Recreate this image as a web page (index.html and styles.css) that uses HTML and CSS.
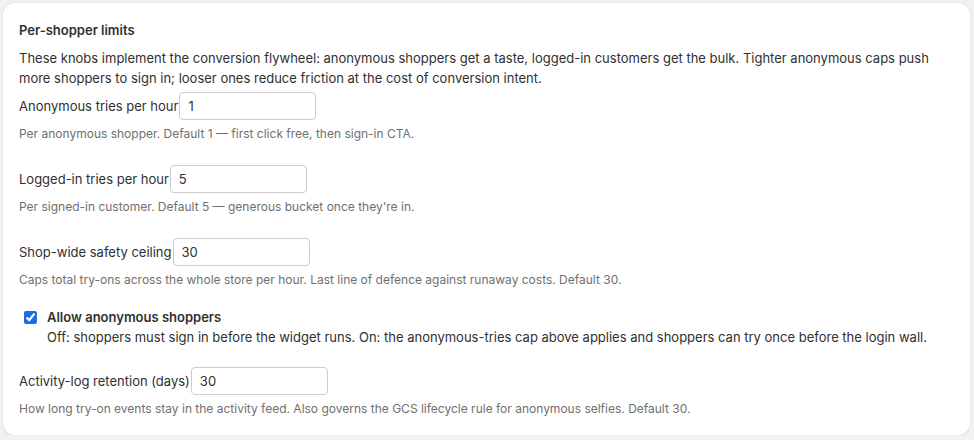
FILE: index.html
```html
<!DOCTYPE html>
<html>
<head>
<meta charset="utf-8">
<link rel="stylesheet" href="styles.css">
</head>
<body>
<div class="card">
  <h2 class="title">Per-shopper limits</h2>
  <p class="intro">These knobs implement the conversion flywheel: anonymous shoppers get a taste, logged-in customers get the bulk. Tighter anonymous caps push more shoppers to sign in; looser ones reduce friction at the cost of conversion intent.</p>

  <div class="field">
    <label class="row"><span>Anonymous tries per hour</span><input class="num" type="text" value="1"></label>
    <p class="help">Per anonymous shopper. Default 1 — first click free, then sign-in CTA.</p>
  </div>

  <div class="field">
    <label class="row"><span>Logged-in tries per hour</span><input class="num" type="text" value="5"></label>
    <p class="help">Per signed-in customer. Default 5 — generous bucket once they're in.</p>
  </div>

  <div class="field">
    <label class="row"><span>Shop-wide safety ceiling</span><input class="num" type="text" value="30"></label>
    <p class="help">Caps total try-ons across the whole store per hour. Last line of defence against runaway costs. Default 30.</p>
  </div>

  <div class="check">
    <input type="checkbox" checked class="cb">
    <div class="check-body">
      <div class="check-label">Allow anonymous shoppers</div>
      <div class="check-desc">Off: shoppers must sign in before the widget runs. On: the anonymous-tries cap above applies and shoppers can try once before the login wall.</div>
    </div>
  </div>

  <div class="field">
    <label class="row"><span>Activity-log retention (days)</span><input class="num" type="text" value="30"></label>
    <p class="help">How long try-on events stay in the activity feed. Also governs the GCS lifecycle rule for anonymous selfies. Default 30.</p>
  </div>
</div>
</body>
</html>
```

FILE: styles.css
```css
html, body {
  margin: 0;
  padding: 0;
  background: #f1f1f1;
}
body {
  padding: 3px 4px 0 3px;
  font-family: Inter, "Noto Sans", sans-serif;
  font-size: 13px;
  color: #303030;
}
.card {
  background: #fff;
  border-radius: 12px;
  padding: 16px 16px 15px 16px;
  box-shadow: 0 1px 0 0 rgba(26,26,26,0.07), 0 0 0 1px rgba(0,0,0,0.04);
  height: 432px;
  box-sizing: border-box;
}
.title {
  margin: 0;
  font-size: 13px;
  font-weight: 600;
  line-height: 22px;
  color: #303030;
}
.intro {
  margin: 7px 0 0 0;
  line-height: 20px;
}
.field {
  margin-top: 4px;
  margin-bottom: 21px;
}
.row {
  display: flex;
  align-items: center;
}
.num {
  width: 137px;
  height: 28px;
  box-sizing: border-box;
  margin: 0 0 0 1px;
  padding: 0 8px;
  border: 1px solid #cccccc;
  border-radius: 4px;
  font-family: Inter, "Noto Sans", sans-serif;
  font-size: 13px;
  color: #303030;
  background: #fff;
}
.help {
  margin: 4px 0 0 0;
  line-height: 20px;
  font-size: 12px;
  color: #707070;
}
.check {
  display: flex;
  align-items: flex-start;
  margin-top: -4px;
  margin-bottom: 20px;
}
.cb {
  width: 13px;
  height: 13px;
  margin: 4px 10px 0 5px;
  accent-color: #1a6fe0;
}
.check-label {
  font-weight: 600;
  line-height: 20px;
}
.check-desc {
  line-height: 20px;
}
```
